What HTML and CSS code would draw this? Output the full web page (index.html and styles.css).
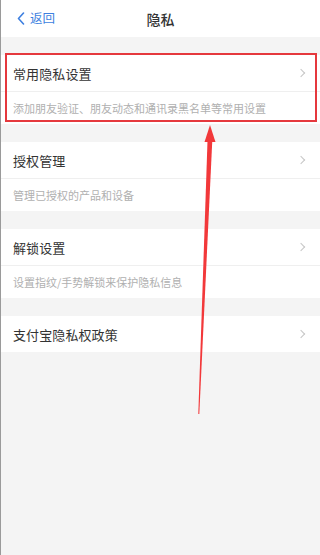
FILE: index.html
```html
<!DOCTYPE html>
<html lang="zh-CN">
<head>
<meta charset="utf-8">
<link rel="stylesheet" href="styles.css">
</head>
<body>
<div class="screen">
  <header class="nav">
    <div class="back">
      <svg class="back-icon" width="8" height="13" viewBox="0 0 8 13"><path d="M6.5 1 L1.5 6.5 L6.5 12" fill="none" stroke="#3d7fe0" stroke-width="1.6" stroke-linecap="round" stroke-linejoin="round"/></svg>
      <span>返回</span>
    </div>
    <div class="title">隐私</div>
  </header>

  <section class="card">
    <div class="row"><span class="row-title">常用隐私设置</span><span class="chev"></span></div>
    <div class="sub">添加朋友验证、朋友动态和通讯录黑名单等常用设置</div>
  </section>

  <section class="card">
    <div class="row"><span class="row-title">授权管理</span><span class="chev"></span></div>
    <div class="sub">管理已授权的产品和设备</div>
  </section>

  <section class="card">
    <div class="row"><span class="row-title">解锁设置</span><span class="chev"></span></div>
    <div class="sub">设置指纹/手势解锁来保护隐私信息</div>
  </section>

  <section class="card">
    <div class="row"><span class="row-title">支付宝隐私权政策</span><span class="chev"></span></div>
  </section>

  <div class="highlight"></div>
  <svg class="arrow" width="320" height="555" viewBox="0 0 320 555">
    <polygon points="207.6,138 212.4,138 199.3,414 198.3,414" fill="#f2383a"/>
    <polygon points="210,125 204.5,142 215.5,142" fill="#f2383a"/>
  </svg>
</div>
</body>
</html>
```

FILE: styles.css
```css
* { box-sizing: border-box; margin: 0; padding: 0; }
html, body { width: 320px; height: 555px; overflow: hidden; }
body {
  font-family: "Noto Sans CJK SC", "Noto Sans", sans-serif;
  background: #f4f4f4;
}
.screen {
  position: relative;
  width: 320px;
  height: 555px;
  background: #f4f4f4;
  border-left: 1px solid #9a9a9a;
  display: flex;
  flex-direction: column;
  gap: 18px;
}
.nav {
  height: 37px;
  background: #fff;
  display: flex;
  align-items: center;
  position: relative;
  padding-left: 16px;
}
.back {
  display: flex;
  align-items: center;
  gap: 5px;
  color: #3d7fe0;
  font-size: 12.5px;
  line-height: 1;
}
.title {
  position: absolute;
  left: 0;
  right: 0;
  text-align: center;
  font-size: 14px;
  font-weight: 500;
  color: #333;
  pointer-events: none;
}
.card {
  background: #fff;
}
.row {
  height: 36px;
  display: flex;
  align-items: center;
  justify-content: space-between;
  padding: 0 14px 0 12px;
  font-size: 13px;
  color: #333;
  letter-spacing: 0.1px;
}
.sub {
  height: 33px;
  border-top: 1px solid #efefef;
  display: flex;
  align-items: center;
  padding-left: 12px;
  font-size: 11px;
  color: #b0b0b0;
}
.chev {
  width: 6px;
  height: 6px;
  border-top: 1.2px solid #c6c6c6;
  border-right: 1.2px solid #c6c6c6;
  transform: rotate(45deg);
  margin-right: 2px;
}
.highlight {
  position: absolute;
  left: 4px;
  top: 53px;
  width: 312px;
  height: 69px;
  border: 2px solid #e5383d;
}
.arrow {
  position: absolute;
  left: -1px;
  top: 0;
}
```
